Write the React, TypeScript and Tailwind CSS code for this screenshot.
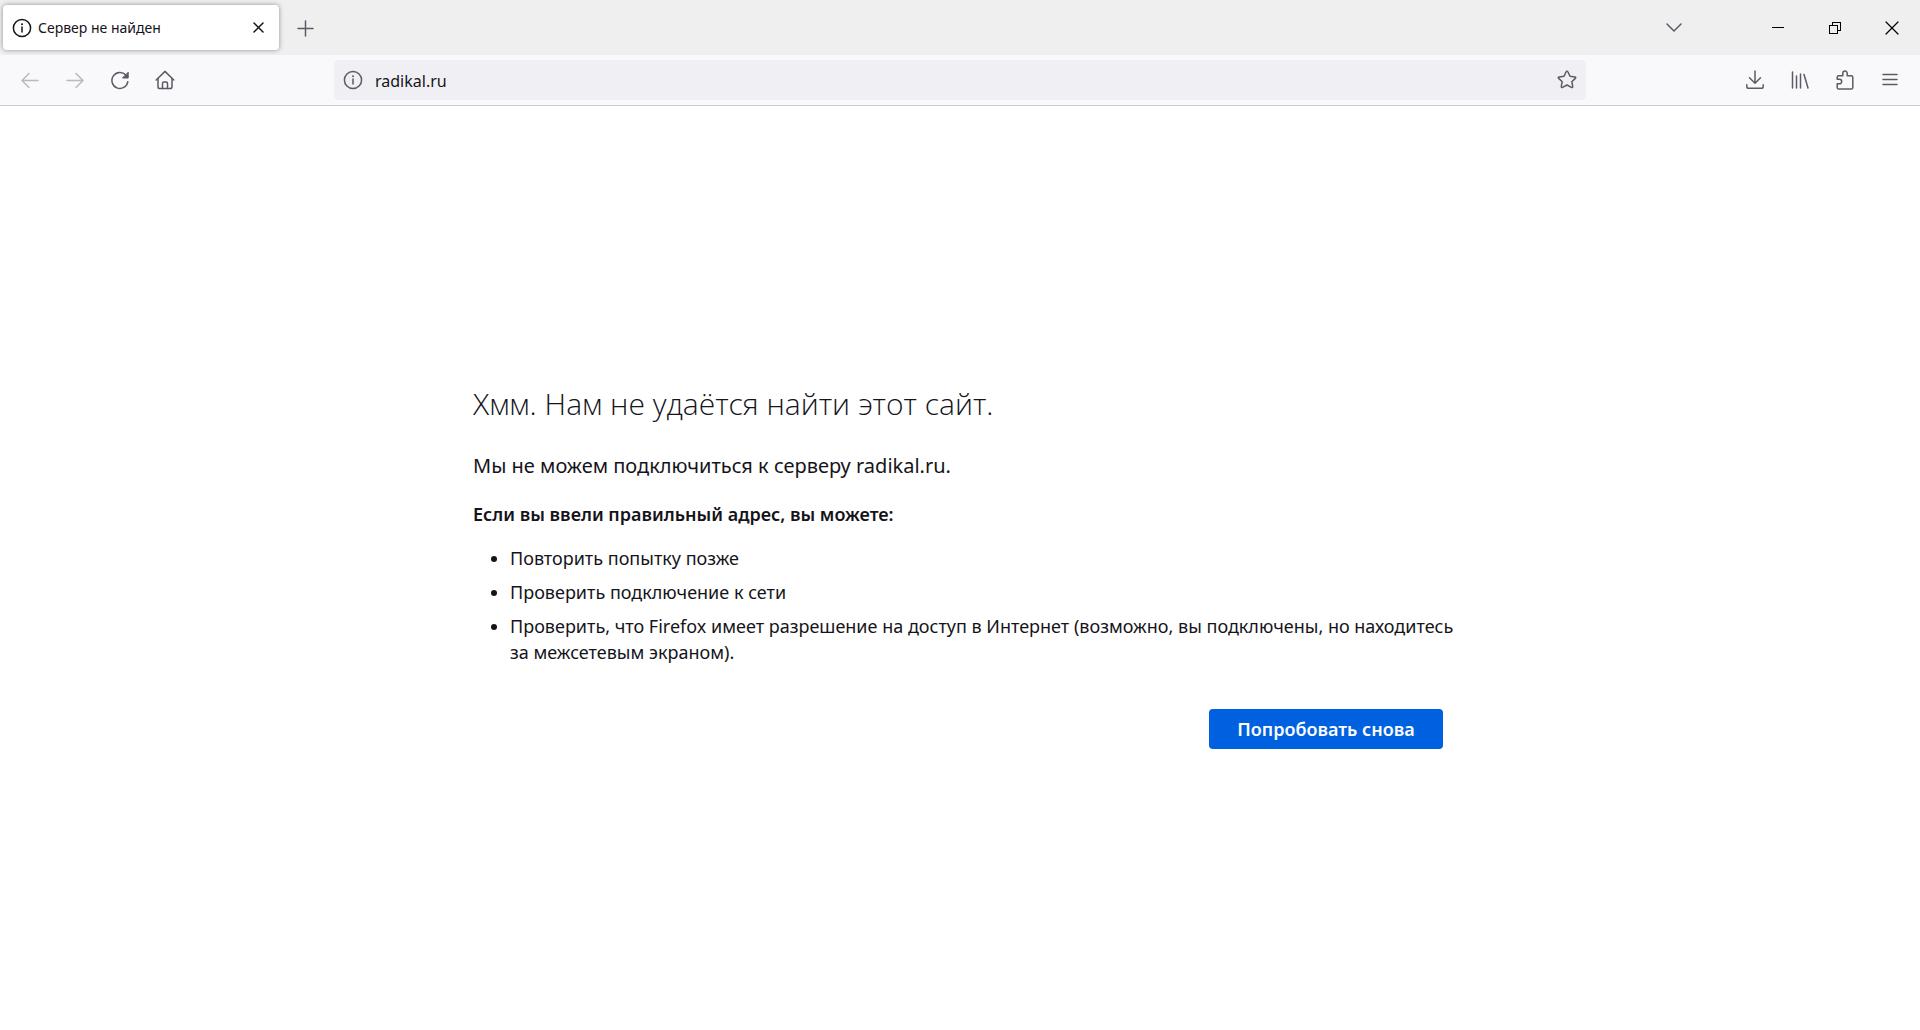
import { useState } from 'react';
import type { ReactNode } from 'react';
import clsx from 'clsx';

interface IconButtonProps {
    label: string;
    children: ReactNode;
    disabled?: boolean;
    className?: string;
}

function IconButton({ label, children, disabled, className }: IconButtonProps) {
    return (
        <button
            type="button"
            aria-label={label}
            title={label}
            disabled={disabled}
            className={clsx('flex items-center justify-center rounded text-[#5b5b66] enabled:hover:bg-black/10 disabled:opacity-40', className || 'h-10 w-[45px]')}
        >
            {children}
        </button>
    );
}

interface IconProps {
    children: ReactNode;
    className?: string;
}

function Icon({ children, className }: IconProps) {
    return (
        <svg
            viewBox="0 0 20 20"
            fill="none"
            stroke="currentColor"
            strokeWidth="1.5"
            strokeLinecap="round"
            strokeLinejoin="round"
            aria-hidden="true"
            className={clsx('h-5 w-5 shrink-0', className)}
        >
            {children}
        </svg>
    );
}

function InfoIcon({ className }: { className?: string }) {
    return (
        <Icon className={className}>
            <circle cx="10" cy="10" r="8.6" />
            <path d="M10 9v5" />
            <circle cx="10" cy="6.2" r="1" fill="currentColor" stroke="none" />
        </Icon>
    );
}

function TabBar() {
    return (
        <header className="flex h-[55px] items-center bg-[#efefef]">
            <div className="ml-[3px] flex h-[45px] w-[276px] items-center rounded bg-white pr-2 pl-[9px] shadow-[0_0_5px_rgba(0,0,0,0.4)]">
                <InfoIcon className="text-[#15141a]" />
                <span className="ml-[6px] flex-1 truncate text-sm text-[#15141a]">Сервер не найден</span>
                <IconButton label="Закрыть вкладку" className="h-6 w-6">
                    <Icon className="text-[#15141a]">
                        <path d="M5 5l9 9M14 5l-9 9" />
                    </Icon>
                </IconButton>
            </div>
            <IconButton label="Новая вкладка" className="ml-[3px] h-10 w-[45px]">
                <Icon>
                    <path d="M10.5 3v15M3 10.5h15" />
                </Icon>
            </IconButton>
            <div className="ml-auto flex items-center">
                <IconButton label="Список вкладок" className="mr-[55px] h-10 w-10">
                    <Icon>
                        <path d="M3 6l7 7 7-7" />
                    </Icon>
                </IconButton>
                <IconButton label="Свернуть" className="h-10 w-[57px]">
                    <Icon className="text-black [shape-rendering:crispEdges]">
                        <path d="M4 9.5h12" strokeWidth="1" strokeLinecap="butt" />
                    </Icon>
                </IconButton>
                <IconButton label="Восстановить" className="h-10 w-[57px]">
                    <Icon className="text-black [shape-rendering:crispEdges]">
                        <path d="M4.5 7.5h8v8h-8zM7.5 7.5v-3h8v8h-3" strokeWidth="1" strokeLinejoin="miter" />
                    </Icon>
                </IconButton>
                <IconButton label="Закрыть" className="h-10 w-[57px]">
                    <Icon className="text-black">
                        <path d="M4 4l12 12M16 4L4 16" strokeWidth="1.2" />
                    </Icon>
                </IconButton>
            </div>
        </header>
    );
}

function NavBar() {
    const [url, setUrl] = useState('radikal.ru');

    return (
        <nav className="flex h-[51px] items-center border-b border-[#ccc] bg-[#f9f9fb] pr-2 pl-[7px]">
            <IconButton label="Назад" disabled>
                <Icon>
                    <path d="M18 10.5H2M9 3.5l-7 7 7 7" />
                </Icon>
            </IconButton>
            <IconButton label="Вперёд" disabled>
                <Icon>
                    <path d="M2 10.5h16M11 3.5l7 7-7 7" />
                </Icon>
            </IconButton>
            <IconButton label="Обновить">
                <Icon>
                    <path d="M17.8 11.8A8 8 0 1 1 15.8 5" />
                    <path d="M18.2 2.6v5.4h-5.4z" fill="currentColor" strokeWidth="1" />
                </Icon>
            </IconButton>
            <IconButton label="Домой">
                <Icon>
                    <path d="M1.2 10L10 1.4 18.8 10" />
                    <path d="M3 8.6v8.2q0 1.8 1.8 1.8h10.4q1.8 0 1.8-1.8V8.6" />
                    <path d="M7.5 18.4v-5q0-1.4 1.4-1.4h2.2q1.4 0 1.4 1.4v5" />
                </Icon>
            </IconButton>
            <div className="mr-[146px] ml-[147px] flex h-10 flex-1 items-center rounded bg-[#f0f0f4] pr-[7px] pl-[9px]">
                <InfoIcon className="text-[#5b5b66]" />
                <input
                    type="text"
                    aria-label="Адрес"
                    value={url}
                    onChange={(e) => setUrl(e.target.value)}
                    className="ml-3 min-w-0 flex-1 bg-transparent pt-0.5 text-base text-[#15141a] outline-none"
                />
                <IconButton label="Добавить в закладки" className="h-6 w-6">
                    <Icon>
                        <path d="M10 1.2q.7 0 1 .8l2 4.3 4.800.6q1.600.3.5 1.500l-3.500 3.300.9 4.700q.2 1.700-1.300.9L10 15l-4.400 2.300q-1.500.8-1.300-.9l.9-4.700L1.700 8.400Q.6 7.200 2.200 6.900L7 6.300 9 2q.3-.8 1-.8z" />
                    </Icon>
                </IconButton>
            </div>
            <IconButton label="Загрузки">
                <Icon>
                    <path d="M10 1v12M4.5 7.8L10 13.2l5.5-5.4" />
                    <path d="M1.8 14.8v1.7q0 1.8 1.8 1.8h12.8q1.8 0 1.8-1.8v-1.7" />
                </Icon>
            </IconButton>
            <IconButton label="Библиотека">
                <Icon>
                    <path d="M2.5 2v16M6.5 6v12M10.5 4v14M14 4.5L18 18" />
                </Icon>
            </IconButton>
            <IconButton label="Расширения">
                <Icon>
                    <path d="M3.8 19q-1.6 0-1.6-1.6v-3.6h2.2a2.2 2.2 0 0 0 0-4.6H2.2V7.4q0-1.6 1.6-1.6h4V3.3a2.2 2.2 0 0 1 4.4 0v2.5h4q1.6 0 1.6 1.6v10q0 1.6-1.6 1.6z" />
                </Icon>
            </IconButton>
            <IconButton label="Меню">
                <Icon>
                    <path d="M3 4.5h14M3 9.5h14M3 14.5h14" />
                </Icon>
            </IconButton>
        </nav>
    );
}

const suggestions = [
    'Повторить попытку позже',
    'Проверить подключение к сети',
    'Проверить, что Firefox имеет разрешение на доступ в Интернет (возможно, вы подключены, но находитесь за межсетевым экраном).',
];

function ErrorPage() {
    return (
        <main className="flex flex-1 items-center justify-center bg-white pr-1 pb-0.5 text-[#15141a]">
            <div className="w-full max-w-[970px]">
                <h1 className="font-['Open_Sans',sans-serif] text-3xl leading-9 font-light">Хмм. Нам не удаётся найти этот сайт.</h1>
                <p className="mt-[30px] text-xl leading-7">Мы не можем подключиться к серверу radikal.ru.</p>
                <p className="mt-[21px] text-lg leading-[26px] font-semibold">Если вы ввели правильный адрес, вы можете:</p>
                <ul className="-mr-4 mt-[18px] list-disc space-y-2 pl-[37px] text-lg leading-[26px]">
                    {suggestions.map((item) => (
                        <li key={item}>{item}</li>
                    ))}
                </ul>
                <div className="mt-11 flex justify-end">
                    <button type="button" className="h-10 min-w-[234px] rounded bg-[#0061e0] px-6 text-lg font-semibold text-[#fbfbfe] hover:bg-[#0250bb]">
                        Попробовать снова
                    </button>
                </div>
            </div>
        </main>
    );
}

export default function App() {
    return (
        <div className="flex min-h-screen flex-col bg-white font-['Noto_Sans',sans-serif]">
            <TabBar />
            <NavBar />
            <ErrorPage />
        </div>
    );
}
